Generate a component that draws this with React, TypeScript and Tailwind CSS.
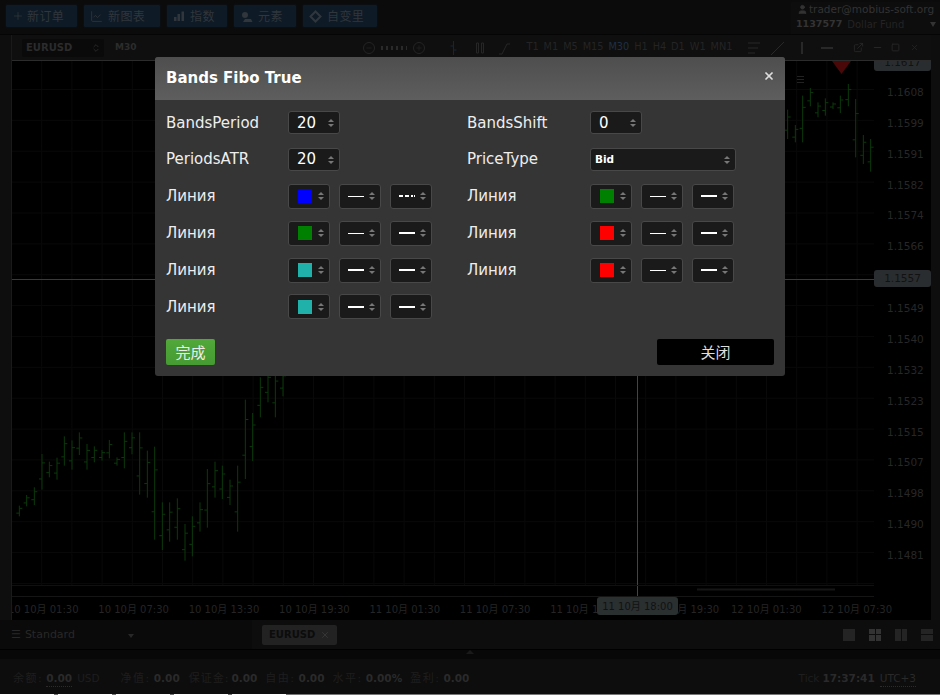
import { Plus, LineChart, Minus, Square, X, ExternalLink, User, ChevronsUpDown } from 'lucide-react';

const DEJAVU = 'font-["DejaVu_Sans","Noto_Sans_CJK_SC",sans-serif]';

// high/low bars, x/top/bottom as read from the chart
const leftBars = [
  [58, 410, 442], [80, 378, 412], [103, 355, 408], [126, 255, 362], [148, 278, 325], [171, 266, 332],
  [193, 202, 290], [216, 214, 302], [238, 190, 258], [261, 225, 302], [283, 232, 280], [306, 243, 275],
  [328, 213, 268], [351, 265, 290], [373, 190, 298], [396, 190, 256], [419, 190, 377], [442, 245, 386],
  [464, 233, 512], [487, 400, 543], [509, 400, 518], [532, 388, 512], [555, 465, 575], [577, 442, 562],
  [600, 400, 488], [622, 300, 476], [645, 278, 386], [667, 290, 390], [690, 332, 408], [713, 290, 488],
  [736, 92, 330], [758, 132, 276], [781, 25, 145], [804, 0, 100], [826, 0, 145], [849, 0, 82],
];
const rightBars = [
  [23, 182, 270], [46, 228, 280], [68, 140, 280], [91, 117, 172], [114, 160, 205], [136, 148, 200],
  [159, 160, 180], [181, 140, 192], [205, 105, 172], [227, 150, 325], [250, 258, 345], [272, 270, 368],
];

const prices = ['1.1608', '1.1599', '1.1591', '1.1582', '1.1574', '1.1566', '', '1.1549', '1.1540', '1.1532', '1.1523', '1.1515', '1.1507', '1.1498', '1.1490', '1.1481'];
const times = ['10 10月 01:30', '10 10月 07:30', '10 10月 13:30', '10 10月 19:30', '11 10月 01:30', '11 10月 07:30', '11 10月 13:30', '11 10月 19:30', '12 10月 01:30', '12 10月 07:30'];
const periods = ['T1', 'M1', 'M5', 'M15', 'M30', 'H1', 'H4', 'D1', 'W1', 'MN1'];

function Bar({ x, top, bottom }: { x: number; top: number; bottom: number }) {
  const open = top + (bottom - top) * 0.7;
  const close = top + (bottom - top) * 0.25;
  return (
    <g stroke="#0b3a0b" strokeWidth="1">
      <line x1={x} y1={top} x2={x} y2={bottom} />
      <line x1={x - 3} y1={open} x2={x} y2={open} />
      <line x1={x} y1={close} x2={x + 3} y2={close} />
    </g>
  );
}

function Chart() {
  const v = [];
  for (let x = 29.7; x < 862; x += 30.2) v.push(x);
  const h = [];
  for (let y = 28.5; y < 535; y += 30.87) h.push(y);
  return (
    <svg className="absolute inset-0 h-full w-full" viewBox="0 0 862 535">
      {v.map((x) => <line key={x} x1={x} y1="0" x2={x} y2="525" stroke="#090909" />)}
      {h.map((y) => <line key={y} x1="0" y1={y} x2="862" y2={y} stroke="#090909" />)}
      {leftBars.map(([x, t, b]) => <Bar key={x} x={x / 3 - 12} top={308 + t / 3} bottom={308 + b / 3} />)}
      {rightBars.map(([x, t, b]) => <Bar key={x} x={768 + x / 3} top={t / 3 - 12} bottom={b / 3 - 12} />)}
      <path d="M820 0h19l-9.5 13z" fill="#4a0808" />
      <path d="M785 15.5h7M785 18.5h7M785 21.5h7" stroke="#222222" />
      <line x1="0" y1="218.5" x2="862" y2="218.5" stroke="#3a3a3a" />
      <line x1="625.5" y1="314" x2="625.5" y2="535" stroke="#444444" />
      <line x1="0" y1="524.5" x2="862" y2="524.5" stroke="#101010" />
      <line x1="685" y1="528.5" x2="823" y2="528.5" stroke="#161616" strokeWidth="2" />
    </svg>
  );
}

function ToolButton({ icon, label, w, gap }: { icon: React.ReactNode; label: string; w: string; gap: string }) {
  return (
    <div className={`flex h-[24px] items-center rounded-[2px] border border-[#0a0e12] bg-[#0e1a26] pl-[6px] text-[12px] tracking-[0.4px] text-[#30363b] ${w} ${gap}`}>
      {icon}
      <span className='font-["Noto_Sans_CJK_SC",sans-serif]'>{label}</span>
    </div>
  );
}

function Stepper() {
  return (
    <div className="flex flex-col gap-[2px]">
      <div className="h-0 w-0 border-x-[3px] border-b-[3px] border-x-transparent border-b-[#777777]" />
      <div className="h-0 w-0 border-x-[3px] border-t-[3px] border-x-transparent border-t-[#777777]" />
    </div>
  );
}

function NumberInput({ value }: { value: string }) {
  return (
    <div className="flex h-[23px] w-[52px] items-center justify-between rounded-[3px] border border-[#484848] bg-[#1a1a1a] pl-[8px] pr-[5px] text-[15px] text-white">
      <span>{value}</span>
      <Stepper />
    </div>
  );
}

function SelectBox({ children }: { children: React.ReactNode }) {
  return (
    <div className="flex h-[25px] w-[42px] items-center justify-between rounded-[3px] border border-[#484848] bg-[#1a1a1a] pl-[7px] pr-[5px]">
      <div className="flex w-[17px] items-center justify-center">{children}</div>
      <Stepper />
    </div>
  );
}

function LineSample({ kind }: { kind: 'thin' | 'thick' | 'dash' }) {
  if (kind === 'dash') {
    return (
      <svg width="16" height="2" viewBox="0 0 16 2">
        <path d="M0 1h4M6 1h4M12 1h2M15 1h1" stroke="#ffffff" strokeWidth="2" />
      </svg>
    );
  }
  return <div className={kind === 'thin' ? 'h-px w-[16px] bg-white' : 'h-[2px] w-[16px] bg-white'} />;
}

function LineRow({ color, a, b, wide }: { color: string; a: 'thin' | 'thick' | 'dash'; b: 'thin' | 'thick' | 'dash'; wide?: boolean }) {
  return (
    <Row label="Линия" wide={wide}>
      <div className="flex gap-[9px]">
        <SelectBox><div className={`h-[14px] w-[14px] ${color}`} /></SelectBox>
        <SelectBox><LineSample kind={a} /></SelectBox>
        <SelectBox><LineSample kind={b} /></SelectBox>
      </div>
    </Row>
  );
}

function Row({ label, wide, children }: { label: string; wide?: boolean; children: React.ReactNode }) {
  return (
    <div className="flex h-[36.8px] items-center">
      <div className={`${wide ? 'w-[123px]' : 'w-[122px]'} text-[15px] text-[#eeeeee]`}>{label}</div>
      {children}
    </div>
  );
}

function Dialog() {
  return (
    <div className={`absolute left-[155px] top-[57px] flex h-[319px] w-[630px] flex-col rounded-[3px] bg-[#353535] ${DEJAVU}`}>
      <div className="flex h-[43px] items-center justify-between rounded-t-[3px] bg-gradient-to-b from-[#4e4e4e] to-[#5e5e5e] pl-[11px] pr-[10px]">
        <span className="text-[15px] font-bold text-white">Bands Fibo True</span>
        <X className="mb-[6px] h-[12px] w-[12px] text-[#dddddd]" strokeWidth={3.5} />
      </div>
      <div className="flex pl-[11px] pt-[4.5px]">
        <div className="w-[301px]">
          <Row label="BandsPeriod"><NumberInput value="20" /></Row>
          <Row label="PeriodsATR"><NumberInput value="20" /></Row>
          <LineRow color="bg-[#0000ff]" a="thin" b="dash" />
          <LineRow color="bg-[#008000]" a="thin" b="thick" />
          <LineRow color="bg-[#20b2aa]" a="thick" b="thick" />
          <LineRow color="bg-[#20b2aa]" a="thick" b="thick" />
        </div>
        <div className="flex-1">
          <Row wide label="BandsShift"><NumberInput value="0" /></Row>
          <Row wide label="PriceType">
            <div className="flex h-[23px] w-[146px] items-center justify-between rounded-[3px] border border-[#484848] bg-[#1a1a1a] pl-[4px] pr-[5px] text-[10.5px] font-bold text-white">
              <span>Bid</span>
              <Stepper />
            </div>
          </Row>
          <LineRow wide color="bg-[#008000]" a="thin" b="thick" />
          <LineRow wide color="bg-[#ff0000]" a="thin" b="thick" />
          <LineRow wide color="bg-[#ff0000]" a="thin" b="thick" />
        </div>
      </div>
      <div className="mt-[13.5px] flex items-center justify-between pl-[11px] pr-[11px] font-['Noto_Sans_CJK_SC',sans-serif] text-[15px]">
        <div className="flex h-[26px] w-[49px] items-center justify-center rounded-[2px] bg-gradient-to-b from-[#52a83a] to-[#459a32] text-[#eeeeee]">完成</div>
        <div className="flex h-[26px] w-[117px] items-center justify-center rounded-[2px] bg-black text-[#dddddd]">关闭</div>
      </div>
    </div>
  );
}

export default function App() {
  return (
    <div className={`relative flex h-[695px] w-[940px] flex-col overflow-hidden bg-[#0b0b0b] ${DEJAVU}`}>
      {/* top toolbar */}
      <div className="flex h-[35px] shrink-0 border-b border-[#050505] bg-[#0b0b0b]">
        <div className="flex gap-[5px] pl-[5px] pt-[4px]">
          <ToolButton w="w-[73px]" gap="gap-[3px]" label="新订单" icon={<Plus className="h-[12px] w-[12px]" strokeWidth={1.5} />} />
          <ToolButton w="w-[78px]" gap="gap-[5px]" label="新图表" icon={<LineChart className="h-[13px] w-[13px]" strokeWidth={1.5} />} />
          <ToolButton w="w-[62px]" gap="gap-[5px]" label="指数" icon={
            <svg width="12" height="11" viewBox="0 0 12 11" fill="#30363b"><path d="M1 6h2.5v4H1zM4.500 3H7v7H4.500zM8.500 0.500H11V10H8.500z" /></svg>
          } />
          <ToolButton w="w-[64px]" gap="gap-[5px]" label="元素" icon={
            <svg width="13" height="11" viewBox="0 0 13 11" fill="#30363b"><circle cx="5" cy="4" r="3" /><path d="M3 11l2-3h6l1.500 3z" /></svg>
          } />
          <ToolButton w="w-[76px]" gap="gap-[5px]" label="自变里" icon={
            <svg width="13" height="13" viewBox="0 0 13 13" fill="none" stroke="#30363b" strokeWidth="2"><path d="M6.500 1.500l5 5-5 5-5-5z" /></svg>
          } />
        </div>
        <div className="ml-auto mt-[2px] w-[149px] bg-[#0d0d0d] pl-[5px] text-[10px] text-[#333333]">
          <div className="flex h-[15px] items-center gap-[2px] pl-[1px] text-[10.5px]">
            <User className="h-[11px] w-[11px] fill-[#333333]" />
            <span className="-ml-px">trader@mobius-soft.org</span>
          </div>
          <div className="flex h-[15px] items-center">
            <span className="text-[9.5px] font-bold">1137577</span>
            <span className="ml-[5px] text-[#232323]">Dollar Fund</span>
            <div className="ml-auto mr-[4px] h-0 w-0 border-x-[3px] border-t-[5px] border-x-transparent border-t-[#333333]" />
          </div>
        </div>
      </div>

      {/* chart with side rails */}
      <div className="flex h-[585px] shrink-0">
        <div className="w-[12px] shrink-0 border-r border-[#1a1a1a] bg-[#0e0e0e]" />
        <div className="flex w-[919px] shrink-0 flex-col">
          <div className="flex h-[26px] shrink-0 items-center border-b border-[#2c2c2c] bg-[#0f0f0f] text-[10px] text-[#262626]">
            <div className="ml-[10px] flex h-[18px] w-[82px] items-center justify-between rounded-[2px] bg-[#0a0a0a] pl-[4px] pr-[3px] text-[10px] font-bold text-[#2c2c2c]">
              EURUSD
              <ChevronsUpDown className="h-[10px] w-[10px]" />
            </div>
            <span className="ml-[11px] text-[9px] font-bold text-[#2c2c2c]">M30</span>
            <div className="ml-[227px] flex w-[68px] items-center gap-[6px] text-[#242424]">
              <div className="flex h-[12px] w-[12px] shrink-0 items-center justify-center rounded-full border border-[#242424]"><Minus className="h-[8px] w-[8px]" /></div>
              <div className="h-[4px] w-[26px] bg-[repeating-linear-gradient(90deg,#2a2a2a_0_2px,transparent_2px_5px)]" />
              <div className="flex h-[12px] w-[12px] shrink-0 items-center justify-center rounded-full border border-[#242424]"><Plus className="h-[8px] w-[8px]" /></div>
            </div>
            <svg className="ml-[18px] shrink-0" width="62" height="16" viewBox="0 0 62 16" fill="none" stroke="#262626">
              <path d="M4.500 1v14M4.500 6h-3M4.500 10h3" stroke="#16263a" />
              <path d="M27.500 3h2v10h-2zM32.500 3h2v10h-2z" />
              <path d="M50 14l3 0 5-10 3 0" />
            </svg>
            <div className="ml-[15px] flex w-[206px] shrink-0 justify-between text-[9.75px]">
              {periods.map((p) => (
                <span key={p} className={p === 'M30' ? 'text-[#1e2f46]' : 'text-[#242424]'}>{p}</span>
              ))}
            </div>
            <svg className="ml-[15px] shrink-0" width="88" height="16" viewBox="0 0 88 16" fill="none" stroke="#282828">
              <path d="M1 3h12M1 8h10M1 13h7" />
              <path d="M24 15L37 2" />
              <path d="M55 2v12" strokeWidth="2" />
              <path d="M74 8h12" strokeWidth="2" />
            </svg>
            <div className="ml-[18px] flex shrink-0 items-center gap-[8px] text-[#262626]">
              <ExternalLink className="h-[11px] w-[11px]" />
              <Minus className="h-[11px] w-[11px]" strokeWidth={2.5} />
              <Square className="h-[9px] w-[9px]" strokeWidth={2.5} />
              <X className="ml-[2px] h-[9px] w-[9px]" />
            </div>
          </div>
          <div className="flex flex-1">
            <div className="flex w-[862px] shrink-0 flex-col">
              <div className="relative flex-1 overflow-hidden bg-black"><Chart /></div>
              <div className="relative z-10 h-[24px] shrink-0 border-t border-[#151515] bg-black text-[10px] text-[#252525] [clip-path:inset(0_-40px_0_0)]">
                <div className="ml-[-14px] flex pt-[5px]">
                  {times.map((t, i) => (
                    <span key={t} className={i === 7 ? 'w-[90.4px] shrink-0 pl-[16px] text-center [clip-path:inset(0_0_0_45px)]' : 'w-[90.4px] shrink-0 text-center'}>{t}</span>
                  ))}
                </div>
              </div>
            </div>
            <div className="relative w-[57px] shrink-0 bg-black text-[10.5px] text-[#272727]">
              <div className="flex h-[10px] w-[57px] items-end justify-center overflow-hidden rounded-b-[3px] bg-[#2a2d2f] text-[#121212]">1.1617</div>
              <div className="pt-[6.5px]">
                {prices.map((p, i) => (
                  <div key={i} className="flex h-[30.87px] items-center pl-[13px]">{p}</div>
                ))}
              </div>
              <div className="absolute left-0 top-[209px] flex h-[17px] w-[57px] items-center justify-center rounded-[3px] bg-[#2a2d2f] text-[#121212]">1.1557</div>
            </div>
          </div>
        </div>
        <div className="w-[9px] shrink-0 bg-[#0e0e0e]" />
      </div>

      {/* tab bar */}
      <div className="flex h-[30px] shrink-0 items-center border-b border-black bg-[#0d0d0d] text-[11px] text-[#282828]">
        <div className="flex h-full w-[252px] items-center bg-[#0a0a0a] pl-[11px] pt-[2px]">
          <span className="mr-[4px]">☰</span>Standard
          <div className="ml-[53px] h-0 w-0 border-x-[3px] border-t-[4px] border-x-transparent border-t-[#282828]" />
        </div>
        <div className="ml-[10px] flex h-[20px] w-[75px] items-center justify-between rounded-[2px] bg-[#222222] px-[7px] text-[10px] font-bold text-[#0c0c0c]">
          EURUSD
          <X className="h-[10px] w-[10px] text-[#3a3a3a]" />
        </div>
        <div className="ml-auto mr-[7px] flex items-center gap-[14px]">
          <div className="h-[12px] w-[12px] bg-[#242424]" />
          <div className="grid h-[12px] w-[12px] grid-cols-2 gap-px">
            <div className="bg-[#333333]" /><div className="bg-[#333333]" /><div className="bg-[#333333]" /><div className="bg-[#333333]" />
          </div>
          <div className="grid h-[12px] w-[12px] grid-cols-2 gap-px">
            <div className="bg-[#242424]" /><div className="bg-[#242424]" />
          </div>
          <div className="grid h-[12px] w-[12px] grid-rows-2 gap-px">
            <div className="bg-[#242424]" /><div className="bg-[#242424]" />
          </div>
        </div>
      </div>

      {/* status bar */}
      <div className="flex h-[9px] shrink-0 justify-center bg-[#080808]">
        <div className="h-0 w-0 border-x-[4px] border-b-[4px] border-x-transparent border-b-[#1a1a1a]" />
      </div>
      <div className="flex flex-1 items-center bg-[#0d0d0d] pl-[13px] pt-[5px] text-[10.5px] text-[#1e1e1e]">
        <span className="tracking-[1.5px] text-[11px]">余额:</span><b className="ml-[3px] border-b border-dotted border-[#2c2c2c] text-[#2a2a2a]">0.00</b><span className="ml-[5px]">USD</span>
        <span className="ml-[21px] tracking-[1.5px] text-[11px]">净值:</span><b className="ml-[3px] text-[#2a2a2a]">0.00</b>
        <span className="ml-[9px] tracking-[1px] text-[11px]">保证金:</span><b className="ml-[2px] text-[#2a2a2a]">0.00</b>
        <span className="ml-[8px] tracking-[1.5px] text-[11px]">自由:</span><b className="ml-[3px] text-[#2a2a2a]">0.00</b>
        <span className="ml-[8px] tracking-[1.5px] text-[11px]">水平:</span><b className="ml-[3px] text-[#2a2a2a]">0.00%</b>
        <span className="ml-[8px] tracking-[1.5px] text-[11px]">盈利:</span><b className="ml-[3px] text-[#2a2a2a]">0.00</b>
        <span className="ml-auto">Tick</span><b className="ml-[3px] text-[#2a2a2a]">17:37:41</b>
        <span className="ml-[5px] mr-[24px] border-b border-dotted border-[#2c2c2c] text-[#2a2a2a]">UTC+3</span>
      </div>
      <div className="flex h-px shrink-0 gap-[4px] bg-[#777777]">
        <div className="w-[54px] bg-white" /><div className="w-[54px] bg-white" /><div className="w-[54px] bg-white" /><div className="w-[54px] bg-white" /><div className="w-[54px] bg-white" />
      </div>

      <Dialog />
      {/* crosshair time tag */}
      <div className="absolute left-[597px] top-[597px] z-20 flex h-[18px] w-[81px] items-center justify-center rounded-[3px] bg-[#2a2f30] text-[10px] text-[#121212]">11 10月 18:00</div>
    </div>
  );
}
